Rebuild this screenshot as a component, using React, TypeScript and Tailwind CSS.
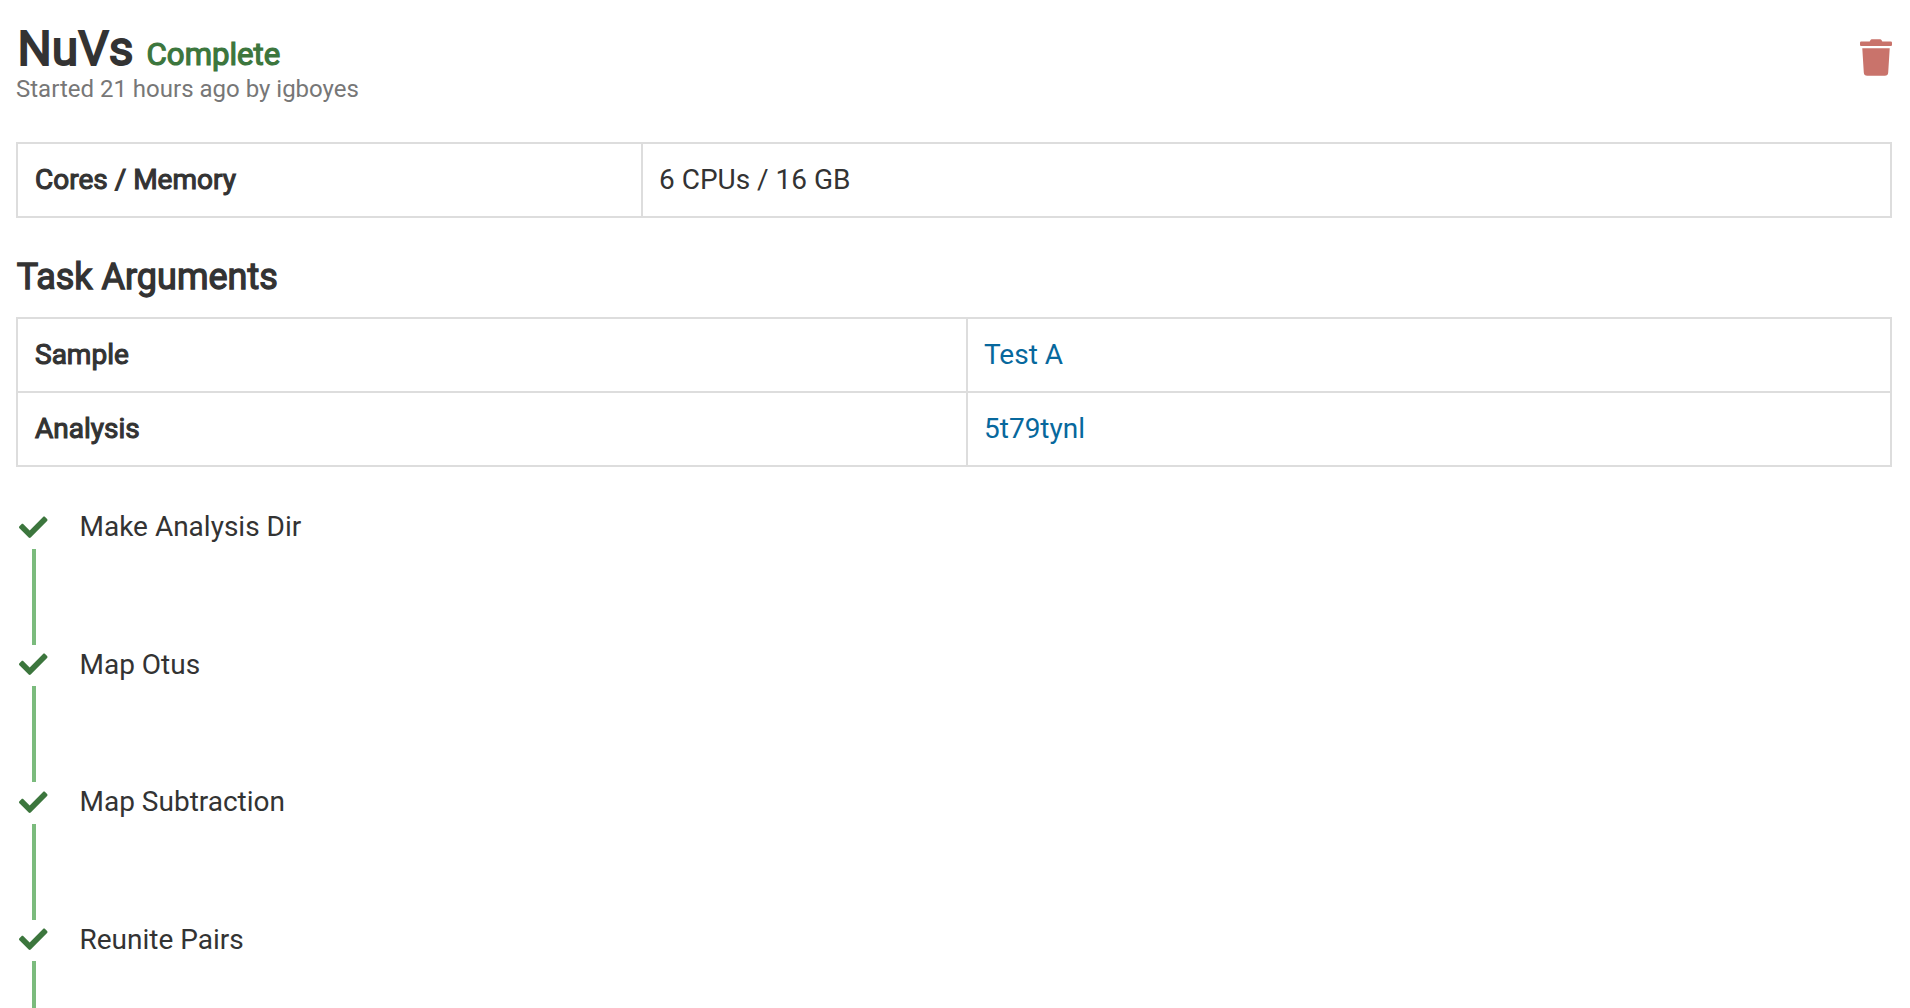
import { FaCheck, FaTrash } from "react-icons/fa";

const steps = ["Make Analysis Dir", "Map Otus", "Map Subtraction", "Reunite Pairs"];

const args = [
  { name: "Sample", value: "Test A" },
  { name: "Analysis", value: "5t79tynl" },
];

const strong = "font-normal [-webkit-text-stroke:1.1px_#333333]";

export default function App() {
  return (
    <main className="h-[1008px] overflow-hidden bg-white pl-4 pr-[18px] pt-[22px] font-[Roboto,sans-serif] text-[28px] leading-10 text-[#333333]">
      <header className="flex h-[120px] items-start justify-between">
        <div>
          <h1 className="flex h-[54px] items-baseline gap-[13px] pl-[1.5px] text-[48px] font-normal leading-[54px] [-webkit-text-stroke:1.9px_#333333]">
            NuVs
            <small className="text-[31.2px] leading-[35px] text-[#3c763d] [-webkit-text-stroke:1.2px_#3c763d]">Complete</small>
          </h1>
          <p className="text-[24px] leading-[26px] text-[#777777]">Started 21 hours ago by igboyes</p>
        </div>
        <button aria-label="Remove job" className="mt-[17px] text-[#c9736b]">
          <FaTrash className="h-[37px] w-8" />
        </button>
      </header>

      <table className="w-full table-fixed border-collapse">
        <tbody>
          <tr className="h-[74px]">
            <th className={`w-[625px] border-2 border-[#dddddd] pl-[17px] pr-4 text-left ${strong}`}>Cores / Memory</th>
            <td className="border-2 border-[#dddddd] px-4">6 CPUs / 16 GB</td>
          </tr>
        </tbody>
      </table>

      <h2 className="mb-[20px] mt-[39px] h-10 pl-[0.7px] text-[36px] font-normal leading-10 [-webkit-text-stroke:1.3px_#333333]">
        Task Arguments
      </h2>

      <table className="w-full table-fixed border-collapse">
        <tbody>
          {args.map(({ name, value }) => (
            <tr key={name} className="h-[74px]">
              <th className={`w-[950px] border-2 border-[#dddddd] pl-[17px] pr-4 text-left ${strong}`}>{name}</th>
              <td className="border-2 border-[#dddddd] px-4 text-[#07689d]">
                <a href="#">{value}</a>
              </td>
            </tr>
          ))}
        </tbody>
      </table>

      <ol className="mt-10">
        {steps.map((step) => (
          <li key={step} className="flex h-[137.43px] gap-8">
            <div className="flex w-8 shrink-0 flex-col items-center pl-[4px]">
              <FaCheck className="-ml-px mt-[6px] size-[28.5px] shrink-0 text-[#3c763d]" />
              <div className="mt-[7.5px] h-24 w-1 shrink-0 bg-[#7bbb7d]" />
            </div>
            <span className="-ml-[0.5px] mt-[0.3px]">{step}</span>
          </li>
        ))}
      </ol>
    </main>
  );
}
